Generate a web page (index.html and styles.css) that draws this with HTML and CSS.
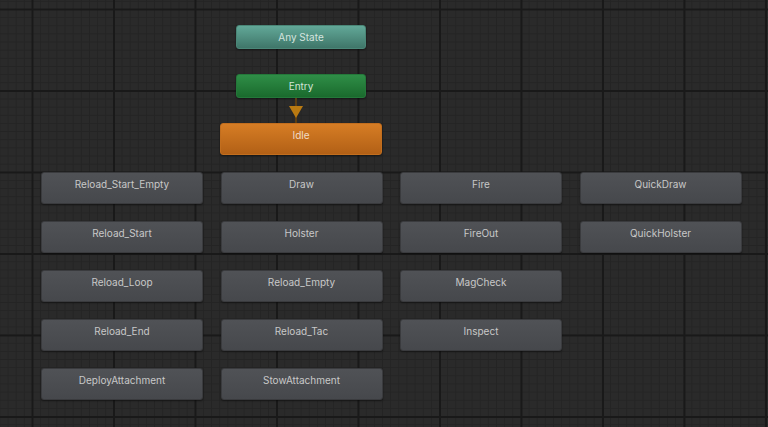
FILE: index.html
```html
<!DOCTYPE html>
<html lang="en">
<head>
    <meta charset="UTF-8">
    <title>Animator</title>
    <link rel="stylesheet" href="styles.css">
</head>
<body>
<div class="graph">
    <!-- special nodes -->
    <div class="node node_any">Any State</div>
    <div class="node node_entry">Entry</div>
    <div class="link"></div>
    <div class="node node_idle">Idle</div>

    <!-- states -->
    <div class="states">
        <div class="node">Reload_Start_Empty</div>
        <div class="node">Draw</div>
        <div class="node">Fire</div>
        <div class="node">QuickDraw</div>

        <div class="node">Reload_Start</div>
        <div class="node">Holster</div>
        <div class="node">FireOut</div>
        <div class="node">QuickHolster</div>

        <div class="node">Reload_Loop</div>
        <div class="node">Reload_Empty</div>
        <div class="node">MagCheck</div>
        <div class="empty"></div>

        <div class="node">Reload_End</div>
        <div class="node">Reload_Tac</div>
        <div class="node">Inspect</div>
        <div class="empty"></div>

        <div class="node">DeployAttachment</div>
        <div class="node">StowAttachment</div>
    </div>
</div>
</body>
</html>
```

FILE: styles.css
```css
*{
    margin: 0;
    padding: 0;
    box-sizing: border-box;
}
body{
    width: 768px;
    height: 427px;
    overflow: hidden;
    background-color: #2a2a2a;
    font-family: Inter, "Noto Sans", sans-serif;
}

.graph{
    position: relative;
    width: 768px;
    height: 427px;
    background-color: #2a2a2a;
    background-image:
        linear-gradient(to right, #191919 1.5px, transparent 1.5px),
        linear-gradient(to bottom, #191919 1.5px, transparent 1.5px),
        linear-gradient(to right, #242424 1px, transparent 1px),
        linear-gradient(to bottom, #242424 1px, transparent 1px);
    background-size: 81.5px 81.5px, 81.5px 81.5px, 8.15px 8.15px, 8.15px 8.15px;
    background-position: 31.5px 8.5px, 31.5px 8.5px, 32px 9px, 32px 9px;
}

.node{
    height: 32px;
    border-radius: 3px;
    background: linear-gradient(#505256, #46484c);
    border: 1px solid #3a3b3e;
    box-shadow: 0 1px 2px rgba(0,0,0,0.45);
    color: #c8c8c8;
    font-size: 10px;
    text-align: center;
    padding-top: 5px;
}

.node_any, .node_entry, .node_idle{
    position: absolute;
}
.node_any{
    left: 236px;
    top: 25px;
    width: 130px;
    height: 24px;
    padding-top: 5px;
    background: linear-gradient(#62a898, #3f7669);
    border-color: #4a8677;
    color: #d4e4df;
}
.node_entry{
    left: 236px;
    top: 74px;
    width: 130px;
    height: 24px;
    padding-top: 5px;
    background: linear-gradient(#2f8e47, #1a6a2d);
    border-color: #24783a;
    color: #d2e4d6;
}
.node_idle{
    left: 220px;
    top: 123px;
    width: 162px;
    height: 32px;
    padding-top: 5px;
    background: linear-gradient(#d67d25, #b26016);
    border-color: #c26e1e;
    color: #f0dcc6;
}

/* entry -> idle */
.link{
    position: absolute;
    left: 295px;
    top: 98px;
    width: 2px;
    height: 25px;
    background-color: #5c3e12;
}
.link::after{
    content: "";
    position: absolute;
    left: -6px;
    top: 8px;
    border-left: 7px solid transparent;
    border-right: 7px solid transparent;
    border-top: 12px solid #b97a12;
}

.states{
    position: absolute;
    left: 41px;
    top: 172px;
    display: grid;
    grid-template-columns: repeat(4, 162px);
    column-gap: 17.5px;
    row-gap: 17px;
}
```
